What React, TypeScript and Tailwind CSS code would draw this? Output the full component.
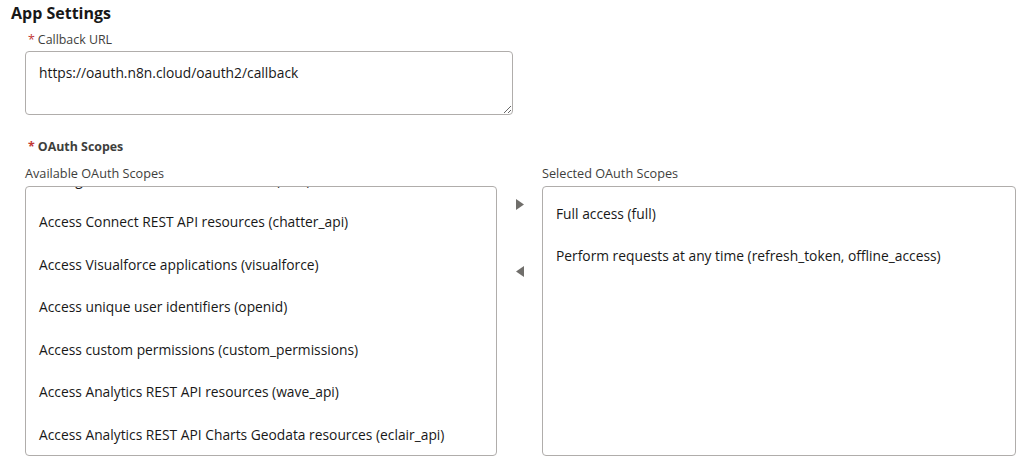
import React from 'react';

const available = [
  'Manage user data via Web browsers (web)',
  'Access Connect REST API resources (chatter_api)',
  'Access Visualforce applications (visualforce)',
  'Access unique user identifiers (openid)',
  'Access custom permissions (custom_permissions)',
  'Access Analytics REST API resources (wave_api)',
  'Access Analytics REST API Charts Geodata resources (eclair_api)',
  'Access Lightning applications (lightning)',
];

const selected = [
  'Full access (full)',
  'Perform requests at any time (refresh_token, offline_access)',
];

function Required() {
  return <span className="mr-[3px] text-[#c23934]">*</span>;
}

function ScopeList({ items, offset }: { items: string[]; offset: boolean }) {
  return (
    <div className="h-[270px] overflow-hidden rounded-[4px] border border-[#b0adab] bg-white">
      <ul className={offset ? 'mt-[-34px] py-[6px]' : 'py-[6px]'}>
        {items.map((item) => (
          <li key={item} className="flex h-[42.5px] items-center px-[13px] text-[13.8px] text-[#181818]">
            {item}
          </li>
        ))}
      </ul>
    </div>
  );
}

export default function App() {
  return (
    <div className="h-[460px] w-[1023px] bg-white font-['Open_Sans',sans-serif] text-[#181818]">
      <div className="pl-[11px] pt-[3px]">
        <h2 className="text-[16px] font-bold leading-[20px]">App Settings</h2>
      </div>

      <div className="pl-[25px] pr-[7px]">
        {/* Callback URL */}
        <div className="mt-[8px] pl-[3px] text-[12.4px] leading-[18px] text-[#3e3e3c]">
          <Required />
          Callback URL
        </div>
        <textarea
          readOnly
          defaultValue="https://oauth.n8n.cloud/oauth2/callback"
          className="mt-[2px] block h-[64px] w-[488px] resize-y rounded-[4px] border border-[#b0adab] px-[13px] py-[11px] text-[13.8px] leading-[19px] text-[#181818] outline-none"
        />

        {/* OAuth Scopes */}
        <div className="mt-[23px] pl-[3px] text-[12.4px] font-bold leading-[18px] text-[#3e3e3c]">
          <Required />
          OAuth Scopes
        </div>

        <div className="mt-[9px] flex">
          <div className="w-[472px]">
            <div className="mb-[4px] text-[12.7px] leading-[17px] text-[#3e3e3c]">Available OAuth Scopes</div>
            <ScopeList items={available} offset />
          </div>

          <div className="flex w-[45px] flex-col items-center pt-[34px]">
            <svg width="8" height="11" viewBox="0 0 8 11">
              <path d="M0 0 L8 5.5 L0 11 Z" fill="#706e6b" />
            </svg>
            <svg width="8" height="11" viewBox="0 0 8 11" className="mt-[56px]">
              <path d="M8 0 L0 5.5 L8 11 Z" fill="#706e6b" />
            </svg>
          </div>

          <div className="w-[474px]">
            <div className="mb-[4px] text-[12.7px] leading-[17px] text-[#3e3e3c]">Selected OAuth Scopes</div>
            <ScopeList items={selected} offset={false} />
          </div>
        </div>
      </div>
    </div>
  );
}
